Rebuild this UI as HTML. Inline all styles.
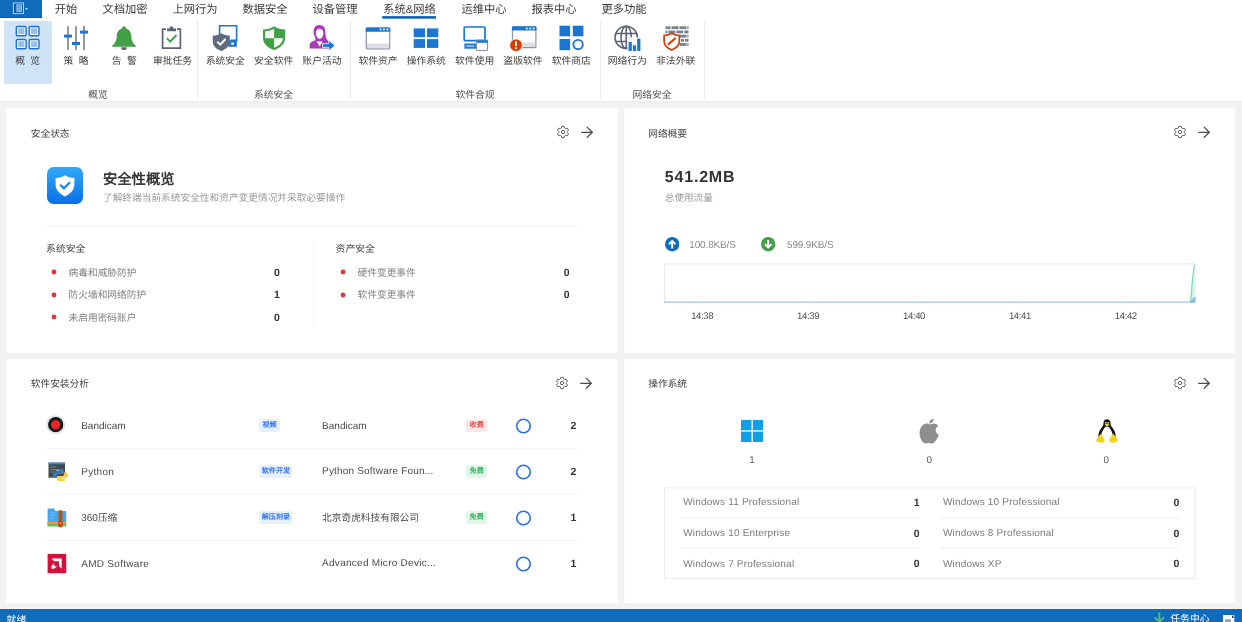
<!DOCTYPE html>
<html lang="zh-CN">
<head>
<meta charset="utf-8">
<title>概览</title>
<style>
*{box-sizing:border-box;margin:0;padding:0}
html,body{width:1242px;height:622px;overflow:hidden;text-rendering:geometricPrecision;background:#f2f2f2;font-family:"Liberation Sans",sans-serif;color:#444}
.abs{position:absolute}
#root{position:absolute;left:0;top:0;width:1242px;height:622px;will-change:transform}
#tabs{position:absolute;left:0;top:0;width:1242px;height:19px}
#appbtn{position:absolute;left:0;top:0;width:42px;height:18px;background:#0f6cbd}
.tab{position:absolute;top:2px;height:17px;line-height:17px;font-size:11.3px;color:#3b3b3b;white-space:nowrap;text-align:center}
#ribbon{position:absolute;left:0;top:18px;width:1242px;height:83.5px}
.rb{position:absolute;top:2.5px;width:48.3px;height:63px}
.rb.sel{background:#cfe4f7}
.rb svg{position:absolute;left:12.1px;top:5px;width:24px;height:25px;overflow:visible}
.rb span{position:absolute;left:-10px;right:-10px;top:35.9px;text-align:center;font-size:9.8px;line-height:12px;color:#444;white-space:nowrap}
.sep{position:absolute;top:2px;width:1px;height:79px;background:#ebebeb}
.gl{position:absolute;top:71.8px;font-size:9.8px;line-height:12px;color:#555;white-space:nowrap;transform:translateX(-50%)}
.card{position:absolute}
.ct{position:absolute;left:24.3px;top:20.6px;font-size:9.7px;line-height:12px;color:#444;white-space:nowrap}
.st{font-size:9.8px;line-height:12px;color:#444;white-space:nowrap}
.row{position:absolute;width:240px;height:12px;font-size:9.7px;line-height:12px;color:#808080;white-space:nowrap}
.row .dt{position:absolute;left:3.5px;top:3px;width:6px;height:6px}
.row span{position:absolute;left:21.6px;top:1.9px}
.row.rr span{left:20.900px}
.row b{position:absolute;left:220px;width:20px;text-align:center;top:0.5px;font-size:10.5px;color:#333}
.kb{margin-top:0.5px;font-size:10px;line-height:12px;color:#8a8a8a;letter-spacing:-0.15px;white-space:nowrap}
.tk{top:202.500px;font-size:9.600px;line-height:12px;color:#505050;letter-spacing:-0.400px;white-space:nowrap;transform:translateX(-50%)}
.dv{position:absolute;left:40px;width:531px;height:1px;background:#f3f3f3}
.nm{margin-top:1.4px;font-size:10px;line-height:12px;color:#4a4a4a;white-space:nowrap}
.cj{font-size:9.700px}
.tg{height:13.200px;line-height:13.200px;border-radius:3px;font-size:7.100px;font-weight:bold;text-align:center;white-space:nowrap;overflow:hidden}
.tb{background:#e6f0fd;color:#3a78e6}
.tr{background:#fde7e7;color:#e24a4a}
.tgn{background:#e2f7e9;color:#2fb45c}
.ring{position:absolute;left:509.300px;width:15px;height:15px;border:1.700px solid #2b6de5;border-radius:50%}
.cnt{margin-top:0.7px;position:absolute;left:556.900px;width:20px;text-align:center;font-size:10.500px;line-height:12px;color:#333}
.oc{top:95px;font-size:9.800px;line-height:12px;color:#555;transform:translateX(-50%)}
.on{margin-top:0.5px;font-size:10px;line-height:12px;color:#7a7a7a;white-space:nowrap;letter-spacing:0.200px}
.ov{margin-top:0.3px;position:absolute;width:20px;text-align:center;font-size:10.500px;line-height:12px;color:#333}
#status{position:absolute;left:0;top:609px;width:1242px;height:13px;background:#0f6cbd;color:#fff;font-size:10px;overflow:hidden}
</style>
</head>
<body>
<div id="root">
<svg class="abs" style="left:0;top:0;width:1242px;height:622px" viewBox="0 0 1242 622"><rect x="0" y="0" width="1242" height="101.300" fill="#fff"/><rect x="0" y="101.300" width="1242" height="1.100" fill="#ebebeb"/><rect x="382.200" y="16.100" width="53.800" height="2.600" fill="#1063b6"/><rect x="0" y="608.500" width="1242" height="0.900" fill="#fafafa"/><g fill="#fff"><rect x="6.700" y="108.500" width="610.600" height="244.400"/><rect x="624.200" y="108.500" width="611.200" height="244.400"/><rect x="6.700" y="359.300" width="610.600" height="243.900"/><rect x="624.200" y="359.300" width="611.200" height="243.900"/></g></svg>
<div id="tabs">
  <div id="appbtn"><svg class="abs" style="left:0;top:0;width:42px;height:18px" viewBox="0 0 42 18"><rect x="0" y="17" width="42" height="1" fill="#0c5ca3"/><rect x="13.400" y="2.900" width="10.100" height="10.700" fill="#0f5fae" stroke="#a9d3fb" stroke-width="1"/><rect x="16.200" y="4.100" width="5.900" height="8" fill="#7fb0e2"/><path d="M18 5.500h2.500M18 7.500h2.500M18 9.500h2.500" stroke="#5f97d2" stroke-width="0.800"/><path d="M24.800 7.900h3.400l-1.700 2z" fill="#a9d3fb"/></svg></div>
  <div class="tab" style="left:42px;width:48px">开始</div>
  <div class="tab" style="left:90px;width:70px">文档加密</div>
  <div class="tab" style="left:160px;width:70px">上网行为</div>
  <div class="tab" style="left:230px;width:70px">数据安全</div>
  <div class="tab" style="left:300px;width:70px">设备管理</div>
  <div class="tab" style="left:370px;width:79px">系统&amp;网络</div>
  <div class="tab" style="left:449px;width:70px">运维中心</div>
  <div class="tab" style="left:519px;width:70px">报表中心</div>
  <div class="tab" style="left:589px;width:70px">更多功能</div>
  
</div>
<div id="ribbon">
  <div class="rb sel" style="left:3.5px"><svg viewBox="0 0 24 25"><g fill="#f4f9ff" stroke="#1f72c8" stroke-width="1.400"><rect x="0.300" y="0.500" width="9.800" height="9.300" rx="1.200"/><rect x="13.200" y="0.500" width="9.800" height="9.300" rx="1.200"/><rect x="0.300" y="13.500" width="9.800" height="9.300" rx="1.200"/><rect x="13.200" y="13.500" width="9.800" height="9.300" rx="1.200"/></g><g fill="#96bff0"><rect x="2.100" y="2.300" width="6.200" height="5.700"/><rect x="15" y="2.300" width="6.200" height="5.700"/><rect x="2.100" y="15.300" width="6.200" height="5.700"/><rect x="15" y="15.300" width="6.200" height="5.700"/></g></svg><span>概&nbsp;&nbsp;览</span></div>
  <div class="rb" style="left:51.8px"><svg viewBox="0 0 24 25"><g stroke="#5b6373" stroke-width="1.3"><path d="M4 0V24M12 0V24M20 0V24"/></g><g fill="#1976d2"><rect x="0" y="8.6" width="8" height="3"/><rect x="8" y="16" width="8" height="3"/><rect x="16" y="4.6" width="8" height="3"/></g></svg><span>策&nbsp;&nbsp;略</span></div>
  <div class="rb" style="left:100.1px"><svg viewBox="0 0 24 25"><path d="M9.2 21.2h5.6a2.8 2.8 0 0 1-5.6 0z" fill="#5b6373"/><path d="M12 0.2c1.1 0 1.9 0.8 1.9 1.8v0.5c3.3 0.9 5.3 3.7 5.3 7.3 0 4.6 1.4 7.3 4.6 9.9v1.1H0.2v-1.1c3.2-2.6 4.6-5.3 4.6-9.9 0-3.6 2-6.4 5.3-7.3V2c0-1 0.8-1.8 1.9-1.8z" fill="#43a047"/></svg><span>告&nbsp;&nbsp;警</span></div>
  <div class="rb" style="left:148.4px"><svg viewBox="0 0 24 25"><path d="M6 3.2H2.6V22.2H20.4V3.2H17" fill="none" stroke="#5b6378" stroke-width="1.7"/><path d="M7 5.2V2.6h2.6c0-1.4 0.8-2.3 1.9-2.3s1.9 0.9 1.9 2.3H16v2.6z" fill="#5b6378"/><path d="M6.8 12.2l3.4 3.4 6.3-6.6" fill="none" stroke="#43a047" stroke-width="1.9"/></svg><span>审批任务</span></div>
  <div class="sep" style="left:197px"></div>
  <div class="rb" style="left:201.2px"><svg viewBox="0 0 24 25"><path d="M6.6 9V-0.2H23.6V14.4H17.5" fill="none" stroke="#1976d2" stroke-width="1.6"/><rect x="15.4" y="14.4" width="8.4" height="6.4" fill="#1976d2"/><rect x="18.3" y="16.6" width="2.6" height="2.2" fill="#fff"/><path d="M8.3 7.2c2.6 1.6 5.3 2.3 8.5 2.3v6.3c0 4.4-3.6 7.4-8.5 9.2C3.4 23.2-0.2 20.2-0.2 15.8V9.5c3.2 0 5.9-0.7 8.5-2.3z" fill="#5e6a80"/><path d="M4.2 15.6l3 3 5.4-5.6" fill="none" stroke="#fff" stroke-width="2"/></svg><span>系统安全</span></div>
  <div class="rb" style="left:249.5px"><svg viewBox="0 0 24 25"><path d="M12.1 0.3c3.4 2.2 6.9 3.1 11.1 3.1v8.3c0 5.9-4.6 10-11.1 12.4C5.6 21.7 1 17.6 1 11.700V3.4c4.200 0 7.700-0.900 11.100-3.100z" fill="#43a047"/><path d="M12.1 2.700v9.600H3.200V5.300c3.300-0.200 6.200-1 8.900-2.600z" fill="#f4fbf4"/><path d="M12.100 12.300h8.900c-0.300 4.300-3.700 7.400-8.900 9.500z" fill="#f4fbf4"/></svg><span>安全软件</span></div>
  <div class="rb" style="left:297.8px"><svg viewBox="0 0 24 25"><path d="M9.400-1c4.200 0 6 3 6 7.200 0 3.400 0.800 6.400 2.200 8.300 3 0.800 4.600 2.400 4.600 4.800v3.300H-0.400v-3.300c0-2.600 2.200-4.200 5.400-4.900C6.600 12.700 3.600 9.500 3.600 6.200 3.600 2 5.200-1 9.400-1z" fill="#a63cb8"/><path d="M9.600 2.800c2.600 0 3.700 1.600 3.700 4.300 0 3-1.700 5.800-3.700 5.800S5.900 10.100 5.900 7.100c0-2.700 1.100-4.300 3.700-4.300z" fill="#fff"/><path d="M6.500 15.500l3.100 5 3.100-5z" fill="#fff"/><path d="M12.600 17.600h6.200v-3.400l6.200 5.300-6.200 5.300v-3.400h-6.200z" fill="#1976d2" stroke="#fff" stroke-width="0.8"/></svg><span>账户活动</span></div>
  <div class="sep" style="left:350px"></div>
  <div class="rb" style="left:353.9px"><svg viewBox="0 0 24 25"><rect x="0.3" y="2.2" width="23.4" height="20.6" rx="1" fill="#fff" stroke="#8a93a6" stroke-width="1.2"/><rect x="1" y="17.6" width="22" height="4.600" fill="#dcdee3"/><path d="M-0.300 2.600a1.200 1.200 0 0 1 1.200-1.200h22.200a1.200 1.200 0 0 1 1.200 1.200v3.200H-0.300z" fill="#1976d2"/><g fill="#fff"><circle cx="14.600" cy="3.600" r="1"/><circle cx="18" cy="3.600" r="1"/><circle cx="21.400" cy="3.600" r="1"/></g></svg><span>软件资产</span></div>
  <div class="rb" style="left:402.2px"><svg viewBox="0 0 24 25"><g fill="#1976d2"><rect x="-0.300" y="2.400" width="11.300" height="8.800"/><rect x="13" y="2.400" width="11.300" height="8.800"/><rect x="-0.300" y="13.100" width="11.300" height="8.800"/><rect x="13" y="13.100" width="11.300" height="8.800"/></g></svg><span>操作系统</span></div>
  <div class="rb" style="left:450.5px"><svg viewBox="0 0 24 25"><rect x="1.200" y="1" width="20.800" height="13.600" rx="0.800" fill="#fff" stroke="#1976d2" stroke-width="1.700"/><rect x="1.400" y="17.500" width="11.600" height="5.200" fill="#1976d2"/><rect x="3.200" y="19.100" width="8" height="2" fill="#8fb9ea"/><rect x="13.500" y="14.200" width="11" height="10.300" rx="0.800" fill="#fff" stroke="#8a93a6" stroke-width="1.200"/><rect x="13.500" y="14.200" width="11" height="2.600" fill="#1976d2"/></svg><span>软件使用</span></div>
  <div class="rb" style="left:498.8px"><svg viewBox="0 0 24 25"><rect x="1.500" y="1" width="23.400" height="20.600" rx="1" fill="#fff" stroke="#8a93a6" stroke-width="1.200"/><rect x="2.200" y="16.600" width="22" height="4.400" fill="#dcdee3"/><path d="M0.900 1.400a1.200 1.200 0 0 1 1.200-1.200h22.200a1.200 1.200 0 0 1 1.200 1.200v3.200H0.900z" fill="#1976d2"/><g fill="#fff"><circle cx="15.800" cy="2.400" r="1"/><circle cx="19.200" cy="2.400" r="1"/><circle cx="22.600" cy="2.400" r="1"/></g><circle cx="5" cy="19.200" r="6.300" fill="#d83b01" stroke="#fff" stroke-width="0.800"/><rect x="4.100" y="15.400" width="1.800" height="4.800" fill="#fff"/><rect x="4.100" y="21.300" width="1.800" height="1.800" fill="#fff"/></svg><span>盗版软件</span></div>
  <div class="rb" style="left:547.1px"><svg viewBox="0 0 24 25"><g fill="#1976d2"><rect x="0.500" y="-0.300" width="10.600" height="10.600"/><rect x="13.800" y="-0.300" width="10.600" height="10.600"/><rect x="0.500" y="13" width="10.600" height="11.200"/></g><circle cx="19.100" cy="18.600" r="4.700" fill="#fff" stroke="#1976d2" stroke-width="1.900"/></svg><span>软件商店</span></div>
  <div class="sep" style="left:599.5px"></div>
  <div class="rb" style="left:603.2px"><svg viewBox="0 0 24 25"><g fill="none" stroke="#5b6373" stroke-width="1.500"><circle cx="11.200" cy="11.400" r="11.200"/><ellipse cx="11.200" cy="11.400" rx="5.200" ry="11.200"/><path d="M11.200 0.200v22.400M0.600 7.400h21.200M0.600 15.400h21.200"/></g><rect x="12.400" y="11.400" width="13.400" height="14" fill="#fff"/><g fill="#1976d2"><rect x="13.600" y="16" width="3.200" height="9"/><rect x="17.900" y="19.400" width="3.200" height="5.600"/><rect x="22.200" y="12.600" width="3.200" height="12.400"/></g></svg><span>网络行为</span></div>
  <div class="rb" style="left:651.5px"><svg viewBox="0 0 24 25"><g fill="#7a8290"><rect x="1.500" y="0.300" width="5" height="2.800"/><rect x="7.500" y="0.300" width="7" height="2.800"/><rect x="15.500" y="0.300" width="7" height="2.800"/><rect x="23.300" y="0.300" width="1.200" height="2.800"/><rect x="1.500" y="4.500" width="1.800" height="2.800"/><rect x="4.300" y="4.500" width="7" height="2.800"/><rect x="12.300" y="4.500" width="7" height="2.800"/><rect x="20.300" y="4.500" width="4.200" height="2.800"/><rect x="15.500" y="8.700" width="7" height="2.800"/><rect x="23.300" y="8.700" width="1.200" height="2.800"/><rect x="17" y="12.900" width="3" height="2.800"/><rect x="21" y="12.900" width="3.500" height="2.800"/><rect x="15.500" y="17.100" width="7" height="2.800"/><rect x="23.300" y="17.100" width="1.200" height="2.800"/></g><path d="M7.700 7.300c2.400 1.500 4.800 2.200 7.600 2.200v5.800c0 4-3.200 6.900-7.600 8.700C3.300 22.200 0.100 19.300 0.100 15.300V9.500c2.800 0 5.200-0.700 7.600-2.200z" fill="#fff" stroke="#d83b01" stroke-width="1.700"/><path d="M3.800 18.600l8-6.600" stroke="#d83b01" stroke-width="2.100"/></svg><span>非法外联</span></div>
  <div class="sep" style="left:704px"></div>
  <div class="gl" style="left:98px">概览</div>
  <div class="gl" style="left:273.5px">系统安全</div>
  <div class="gl" style="left:475px">软件合规</div>
  <div class="gl" style="left:652px">网络安全</div>
</div>
<div class="card" id="c1" style="left:6.5px;top:108px;width:611px;height:245px"><div class="ct">安全状态</div>
  <svg class="abs hdr" style="left:549.5px;top:17px;width:40px;height:14px" viewBox="0 0 40 14"><g fill="none" stroke="#5f5f5f" stroke-width="1"><path d="M5.900 1.300h2.200l0.500 1.700 1.100 0.600 1.700-0.400 1.100 1.900-1.200 1.300v1.200l1.200 1.300-1.100 1.900-1.700-0.400-1.100 0.600-0.500 1.700H5.900l-0.500-1.700-1.100-0.600-1.700 0.400-1.100-1.900 1.200-1.300V6.400L1.500 5.100l1.100-1.900 1.700 0.400 1.100-0.600z" stroke-linejoin="round"/><circle cx="7" cy="7" r="1.700"/></g><path d="M25.200 7.300h11M30.800 1.900l5.500 5.400-5.500 5.400" fill="none" stroke="#4d4d4d" stroke-width="1.300"/></svg>
  <svg class="abs" style="left:40.300px;top:58.600px;width:36px;height:37px" viewBox="0 0 36 37"><defs><linearGradient id="g1" x1="0" y1="0" x2="0" y2="1"><stop offset="0" stop-color="#2fa9f8"/><stop offset="1" stop-color="#0a6fe8"/></linearGradient></defs><rect width="36" height="37" rx="6.500" fill="url(#g1)"/><path d="M18 8.200c2.900 1.900 5.900 2.600 9.400 2.700v6.500c0 5.400-3.900 9.500-9.400 12-5.500-2.500-9.400-6.600-9.400-12v-6.500c3.500-0.100 6.500-0.800 9.400-2.700z" fill="#fff"/><path d="M13.800 18.300l3.100 3.100 5.500-5.700" fill="none" stroke="#1a84ee" stroke-width="2.200" stroke-linecap="round" stroke-linejoin="round"/></svg>
  <div class="abs" style="left:96.500px;top:62.600px;font-size:14.300px;line-height:18px;font-weight:bold;color:#383838;white-space:nowrap">安全性概览</div>
  <div class="abs" style="left:96.500px;top:84.500px;font-size:9.700px;line-height:12px;color:#9a9a9a;white-space:nowrap">了解终端当前系统安全性和资产变更情况并采取必要操作</div>
  <div class="abs" style="left:40.500px;top:117.500px;width:531px;height:1px;background:#f0f0f0"></div>
  <div class="abs" style="left:306px;top:132px;width:1px;height:84px;background:#f4f4f4"></div>
  <div class="abs st" style="left:39.600px;top:135.500px">系统安全</div>
  <div class="abs st" style="left:329.100px;top:135.500px">资产安全</div>
  <div class="row" style="left:40.500px;top:158px"><svg class="dt" viewBox="0 0 6 6"><circle cx="3" cy="3" r="2.450" fill="#e7343a"/></svg><span>病毒和威胁防护</span><b>0</b></div>
  <div class="row" style="left:40.500px;top:180.500px"><svg class="dt" viewBox="0 0 6 6"><circle cx="3" cy="3" r="2.450" fill="#e7343a"/></svg><span>防火墙和网络防护</span><b>1</b></div>
  <div class="row" style="left:40.500px;top:203.200px"><svg class="dt" viewBox="0 0 6 6"><circle cx="3" cy="3" r="2.450" fill="#e7343a"/></svg><span>未启用密码账户</span><b>0</b></div>
  <div class="row rr" style="left:330.200px;top:158px"><svg class="dt" viewBox="0 0 6 6"><circle cx="3" cy="3" r="2.450" fill="#e7343a"/></svg><span>硬件变更事件</span><b>0</b></div>
  <div class="row rr" style="left:330.200px;top:180.500px"><svg class="dt" viewBox="0 0 6 6"><circle cx="3" cy="3" r="2.450" fill="#e7343a"/></svg><span>软件变更事件</span><b>0</b></div>
</div>
<div class="card" id="c2" style="left:624px;top:108px;width:611.5px;height:245px"><div class="ct">网络概要</div>
  <svg class="abs hdr" style="left:549.200px;top:17px;width:40px;height:14px" viewBox="0 0 40 14"><g fill="none" stroke="#5f5f5f" stroke-width="1"><path d="M5.900 1.300h2.200l0.500 1.700 1.100 0.600 1.700-0.400 1.100 1.900-1.200 1.300v1.200l1.200 1.300-1.100 1.900-1.700-0.400-1.100 0.600-0.500 1.700H5.900l-0.500-1.700-1.100-0.600-1.700 0.400-1.100-1.900 1.200-1.300V6.400L1.500 5.100l1.100-1.900 1.700 0.400 1.100-0.600z" stroke-linejoin="round"/><circle cx="7" cy="7" r="1.700"/></g><path d="M25.200 7.300h11M30.800 1.900l5.500 5.400-5.500 5.400" fill="none" stroke="#4d4d4d" stroke-width="1.300"/></svg>
  <div class="abs" style="left:40.800px;top:60.200px;font-size:16px;line-height:20px;font-weight:bold;letter-spacing:0.800px;color:#333;white-space:nowrap">541.2MB</div>
  <div class="abs" style="left:40.800px;top:84.600px;font-size:9.600px;line-height:12px;color:#9a9a9a;white-space:nowrap">总使用流量</div>
  <svg class="abs" style="left:41px;top:129.300px;width:14.400px;height:14.400px" viewBox="0 0 14.400 14.400"><circle cx="7.200" cy="7.200" r="7.200" fill="#0f6cbd"/><path d="M7.200 11.400V4.200M3.900 7.300l3.300-3.300 3.300 3.300" fill="none" stroke="#fff" stroke-width="1.900"/></svg>
  <div class="abs kb" style="left:65.300px;top:131.500px">100.8KB/S</div>
  <svg class="abs" style="left:137.200px;top:129.300px;width:14.400px;height:14.400px" viewBox="0 0 14.400 14.400"><circle cx="7.200" cy="7.200" r="7.200" fill="#43a047"/><path d="M7.200 3V10.200M3.900 7.100l3.300 3.300 3.300-3.300" fill="none" stroke="#fff" stroke-width="1.900"/></svg>
  <div class="abs kb" style="left:163px;top:131.500px">599.9KB/S</div>
  <svg class="abs" style="left:39px;top:154px;width:534px;height:46px" viewBox="0 0 534 46"><path d="M1.600 40V1.900H532V40" fill="none" stroke="#e6e6e6" stroke-width="1"/><path d="M527.500 40c1.500-14 2-30 4.200-38.500V40z" fill="#d9f4ee"/><path d="M527.500 40c1.500-14 2-30 4.200-37" fill="none" stroke="#7fd6c2" stroke-width="1.200"/><path d="M527.500 40l4.300-5v5z" fill="#9cc3e6" stroke="#6ea8dc" stroke-width="0.800"/><path d="M1.100 40.100H532.500" stroke="#86b6e0" stroke-width="1"/><path d="M78.200 40.600v2M184.100 40.600v2M290 40.600v2M395.900 40.600v2M501.800 40.600v2" transform="translate(-39 0)" stroke="#dcdcdc" stroke-width="1"/></svg>
  <div class="abs tk" style="left:78.200px">14:38</div>
  <div class="abs tk" style="left:184.100px">14:39</div>
  <div class="abs tk" style="left:290px">14:40</div>
  <div class="abs tk" style="left:395.900px">14:41</div>
  <div class="abs tk" style="left:501.800px">14:42</div>
</div>
<div class="card" id="c3" style="left:6.5px;top:359.5px;width:611px;height:243.5px"><div class="ct" style="top:19.5px">软件安装分析</div>
  <svg class="abs hdr" style="left:548.300px;top:16px;width:40px;height:14px" viewBox="0 0 40 14"><g fill="none" stroke="#5f5f5f" stroke-width="1"><path d="M5.900 1.300h2.200l0.500 1.700 1.100 0.600 1.700-0.400 1.100 1.900-1.200 1.300v1.200l1.200 1.300-1.100 1.900-1.700-0.400-1.100 0.600-0.500 1.700H5.900l-0.500-1.700-1.100-0.600-1.700 0.400-1.100-1.900 1.200-1.300V6.400L1.500 5.100l1.100-1.900 1.700 0.400 1.100-0.600z" stroke-linejoin="round"/><circle cx="7" cy="7" r="1.700"/></g><path d="M25.200 7.300h11M30.800 1.900l5.500 5.400-5.500 5.400" fill="none" stroke="#4d4d4d" stroke-width="1.300"/></svg>
  <div class="dv" style="top:88.800px"></div><div class="dv" style="top:134.700px"></div><div class="dv" style="top:180.500px"></div>
  <!-- row1 -->
  <svg class="abs" style="left:39.400px;top:55.400px;width:20px;height:20px" viewBox="0 0 20 20"><circle cx="9.700" cy="9.700" r="8.800" fill="#fff" stroke="#c9c9c9" stroke-width="0.800"/><circle cx="9.700" cy="9.700" r="7.600" fill="#151515"/><circle cx="9.700" cy="9.700" r="4.700" fill="#ee2326"/></svg>
  <div class="abs nm" style="left:74.700px;top:60.100px">Bandicam</div>
  <div class="abs tg tb" style="left:252.900px;top:59.800px;width:20.400px">视频</div>
  <div class="abs nm" style="left:315.600px;top:60.100px">Bandicam</div>
  <div class="abs tg tr" style="left:459.700px;top:59.800px;width:21px">收费</div>
  <svg class="abs" style="left:508.300px;top:57.7px;width:17px;height:17px" viewBox="0 0 17 17"><circle cx="8.500" cy="9" r="6.800" fill="none" stroke="#2b6de5" stroke-width="1.600"/></svg>
  <b class="cnt" style="top:60.300px">2</b>
  <!-- row2 -->
  <svg class="abs" style="left:40px;top:101px;width:21px;height:21px" viewBox="0 0 21 21"><rect x="1.500" y="1.600" width="16.500" height="15.100" fill="#3f4a50"/><rect x="1.500" y="1.600" width="16.500" height="1.700" fill="#4a86c8"/><path d="M3.200 6h6M3.200 8.500h8M3.200 11h4" stroke="#7a868c" stroke-width="0.900"/><path d="M10.300 7.900h4.200c1.500 0 2.300 0.800 2.300 2.300v2.900h-5.300c-1.300 0-2 0.800-2 2v1.900H8c-1.400 0-2.200-1-2.200-2.900S6.600 11.200 8 11.200h4.300v-0.700H8.500v-0.400c0-1.400 0.700-2.200 1.800-2.200z" fill="#3b7cbc"/><path d="M17.400 11.200h1.300c1.400 0 2.200 1 2.200 2.900s-0.800 2.900-2.200 2.900h-4.300v0.700h3.800v0.400c0 1.400-0.700 2.200-1.800 2.200h-4.200c-1.500 0-2.300-0.800-2.300-2.300v-2.900h5.300c1.300 0 2-0.800 2-2z" fill="#f6d23e"/><circle cx="10.500" cy="9.500" r="0.700" fill="#fff"/></svg>
  <div class="abs nm" style="left:74.700px;top:106.100px;letter-spacing:0.300px">Python</div>
  <div class="abs tg tb" style="left:252.900px;top:105.800px;width:33px">软件开发</div>
  <div class="abs nm" style="left:315.600px;top:104.900px;letter-spacing:0.180px">Python Software Foun...</div>
  <div class="abs tg tgn" style="left:459.700px;top:105.800px;width:21px">免费</div>
  <svg class="abs" style="left:508.300px;top:103.7px;width:17px;height:17px" viewBox="0 0 17 17"><circle cx="8.500" cy="9" r="6.800" fill="none" stroke="#2b6de5" stroke-width="1.600"/></svg>
  <b class="cnt" style="top:106.300px">2</b>
  <!-- row3 -->
  <svg class="abs" style="left:40px;top:148px;width:20px;height:20px" viewBox="0 0 20 20"><path d="M0.600 1.500c0-0.600 0.400-1 1-1h5.300l1.800 2.400h9.500c0.600 0 1 0.400 1 1v14H0.600z" fill="#48a6ee"/><path d="M3 5h5M3 7.500h5M3 10h4" stroke="#7cc3f6" stroke-width="0.900"/><rect x="0.600" y="13.900" width="18.600" height="2.400" fill="#f39a2b"/><rect x="0.600" y="16.200" width="18.600" height="2.300" fill="#6cbf4b"/><rect x="11.500" y="2.300" width="3.900" height="17" fill="#b4551b"/><rect x="11.300" y="13.200" width="4.300" height="4.400" fill="#d8362a"/><rect x="12.700" y="14.500" width="1.500" height="1.600" fill="#f6c344"/></svg>
  <div class="abs nm" style="left:74.700px;top:152.100px">360<span class="cj">压缩</span></div>
  <div class="abs tg tb" style="left:252.900px;top:151.800px;width:33px">解压刻录</div>
  <div class="abs nm cj" style="left:315.600px;top:152.300px">北京奇虎科技有限公司</div>
  <div class="abs tg tgn" style="left:459.700px;top:151.800px;width:21px">免费</div>
  <svg class="abs" style="left:508.300px;top:149.7px;width:17px;height:17px" viewBox="0 0 17 17"><circle cx="8.500" cy="9" r="6.800" fill="none" stroke="#2b6de5" stroke-width="1.600"/></svg>
  <b class="cnt" style="top:152.300px">1</b>
  <!-- row4 -->
  <svg class="abs" style="left:40px;top:193px;width:20px;height:21px" viewBox="0 0 20 21"><rect x="0.600" y="0.900" width="18.600" height="19.300" fill="#d5103c"/><path d="M4.500 5.500H14.700V15.700L12 13V8.200H7.200z" fill="#fff"/><path d="M4.500 13L7.200 10.300V13H9.900L7.200 15.700H4.500z" fill="#fff"/></svg>
  <div class="abs nm" style="left:74.700px;top:198.100px;letter-spacing:0.290px">AMD Software</div>
  <div class="abs nm" style="left:315.600px;top:196.800px;letter-spacing:0.270px">Advanced Micro Devic...</div>
  <svg class="abs" style="left:508.300px;top:195.7px;width:17px;height:17px" viewBox="0 0 17 17"><circle cx="8.500" cy="9" r="6.800" fill="none" stroke="#2b6de5" stroke-width="1.600"/></svg>
  <b class="cnt" style="top:198.300px">1</b>
</div>
<div class="card" id="c4" style="left:624px;top:359.5px;width:611.5px;height:243.5px"><div class="ct" style="top:19.5px">操作系统</div>
  <svg class="abs hdr" style="left:549.200px;top:16px;width:40px;height:14px" viewBox="0 0 40 14"><g fill="none" stroke="#5f5f5f" stroke-width="1"><path d="M5.900 1.300h2.200l0.500 1.700 1.100 0.600 1.700-0.400 1.100 1.900-1.200 1.300v1.200l1.200 1.300-1.100 1.900-1.700-0.400-1.100 0.600-0.500 1.700H5.900l-0.500-1.700-1.100-0.600-1.700 0.400-1.100-1.900 1.200-1.300V6.400L1.500 5.100l1.100-1.900 1.700 0.400 1.100-0.600z" stroke-linejoin="round"/><circle cx="7" cy="7" r="1.700"/></g><path d="M25.200 7.300h11M30.800 1.900l5.500 5.400-5.500 5.400" fill="none" stroke="#4d4d4d" stroke-width="1.300"/></svg>
  <svg class="abs" style="left:116.900px;top:60.200px;width:22.200px;height:22px" viewBox="0 0 22.200 22"><g fill="#0f9fe6"><rect x="0" y="0" width="10.500" height="10.300"/><rect x="11.800" y="0" width="10.400" height="10.300"/><rect x="0" y="11.600" width="10.500" height="10.400"/><rect x="11.800" y="11.600" width="10.400" height="10.400"/></g></svg>
  <svg class="abs" style="left:295px;top:59px;width:21px;height:25px" viewBox="0 0 21 25"><path d="M10.600 5.300c1.300 0 2.500-0.900 4.200-0.900 1.900 0 3.500 0.900 4.500 2.400-1.700 1.100-2.600 2.500-2.600 4.400 0 2.200 1.200 3.800 3.100 4.600-0.900 2.800-2.900 6.100-4.500 7.600-0.900 0.800-1.700 1.100-2.600 1.100-1.100 0-1.700-0.600-3-0.600-1.400 0-2 0.600-3.100 0.600-0.900 0-1.700-0.400-2.600-1.300C1.900 21 0.600 17.500 0.600 14.400c0-5.600 3.200-9.900 7.200-9.900 1.300 0 2 0.800 2.800 0.800z" fill="#8e8e8e"/><path d="M10.200 4.600c-0.300-2.200 1.800-4.600 4.400-4.900 0.400 2.400-1.800 4.800-4.400 4.900z" fill="#8e8e8e"/></svg>
  <svg class="abs" style="left:471.500px;top:59px;width:22px;height:25px" viewBox="0 0 22 25"><path d="M11 0.200c2.200 0 3.500 1.500 3.500 3.800 0 1.800 0.600 3 2.100 5 1.700 2.300 3 4.900 3 7.400 0 2-0.600 3.400-1.600 4.400H4c-1-1-1.600-2.400-1.600-4.400 0-2.500 1.300-5.100 3-7.400 1.500-2 2.100-3.200 2.100-5C7.500 1.700 8.800 0.200 11 0.200z" fill="#141414"/><path d="M11 7.400c1.600 0 2.400 1.200 3.600 3.200 1.300 2.100 2.200 4.200 2.200 6.200 0 2.400-1.400 3.800-2.800 4.600H8c-1.400-0.800-2.800-2.200-2.800-4.600 0-2 0.900-4.100 2.200-6.200C8.600 8.600 9.400 7.400 11 7.400z" fill="#fff"/><path d="M9 5.400c0.600-0.600 1.200-0.800 2-0.800s1.400 0.200 2 0.800c0.300 0.300 0.200 0.700-0.200 0.900l-1.400 0.900c-0.300 0.200-0.500 0.200-0.800 0L9.200 6.300C8.800 6.100 8.700 5.700 9 5.400z" fill="#f2d21b"/><circle cx="9.700" cy="3.700" r="0.800" fill="#fff"/><circle cx="12.300" cy="3.700" r="0.800" fill="#fff"/><path d="M0.500 20.200l3.400-4.400c0.500-0.600 1.300-0.600 1.800 0l2.600 4.200c0.700 1.200 0.500 2.400-0.600 3-1.200 0.700-2.600 0.800-4.200 0.400l-2.200-0.600c-1.100-0.300-1.500-1.600-0.800-2.600z" fill="#f2d21b"/><path d="M21.500 20.200l-3.400-4.400c-0.500-0.600-1.300-0.600-1.800 0l-2.600 4.200c-0.700 1.200-0.500 2.400 0.600 3 1.200 0.700 2.600 0.800 4.200 0.400l2.200-0.600c1.100-0.300 1.500-1.600 0.800-2.600z" fill="#f2d21b"/></svg>
  <div class="abs oc" style="left:128.100px">1</div>
  <div class="abs oc" style="left:305.300px">0</div>
  <div class="abs oc" style="left:482.300px">0</div>
  <svg class="abs" style="left:40px;top:127px;width:532px;height:93px" viewBox="0 0 532 93"><rect x="0.600" y="0.900" width="530.600" height="90.700" fill="none" stroke="#ececec" stroke-width="1"/><path d="M15.800 30.700H256M15.800 61.100H256M276 30.700H515.600M276 61.100H515.600" stroke="#efefef" stroke-width="1"/></svg>
  <div class="abs on" style="left:59.200px;top:137.100px">Windows 11 Professional</div><b class="ov" style="left:282.700px;top:137.300px">1</b>
  <div class="abs on" style="left:59.200px;top:167.600px">Windows 10 Enterprise</div><b class="ov" style="left:282.700px;top:167.800px">0</b>
  <div class="abs on" style="left:59.200px;top:199.200px">Windows 7 Professional</div><b class="ov" style="left:282.700px;top:198.600px">0</b>
  <div class="abs on" style="left:318.900px;top:137.100px">Windows 10 Professional</div><b class="ov" style="left:542.500px;top:137.300px">0</b>
  <div class="abs on" style="left:318.900px;top:167.600px">Windows 8 Professional</div><b class="ov" style="left:542.500px;top:167.800px">0</b>
  <div class="abs on" style="left:318.900px;top:199.200px">Windows XP</div><b class="ov" style="left:542.500px;top:198.600px">0</b>
</div>
<div id="status"><div class="abs" style="left:6.600px;top:6.400px;font-size:9.800px;line-height:12px;white-space:nowrap">就绪</div>
  <svg class="abs" style="left:1153px;top:2.500px;width:13px;height:12px" viewBox="0 0 13 12"><path d="M6.300 0.500V9.500M1.600 5.200l4.700 4.700 4.700-4.700" fill="none" stroke="#5ab873" stroke-width="1.900"/></svg>
  <div class="abs" style="left:1170.300px;top:5.200px;font-size:9.800px;line-height:12px;white-space:nowrap">任务中心</div>
  <svg class="abs" style="left:1223px;top:5.500px;width:12px;height:10px" viewBox="0 0 12 10"><rect x="0" y="0" width="11.300" height="10" fill="#fff"/><rect x="2" y="4.200" width="6" height="4" fill="#9aa3ad"/><rect x="9" y="0.600" width="1.500" height="2.400" fill="#1b3a5c"/></svg>
</div>
</div>
</body>
</html>
